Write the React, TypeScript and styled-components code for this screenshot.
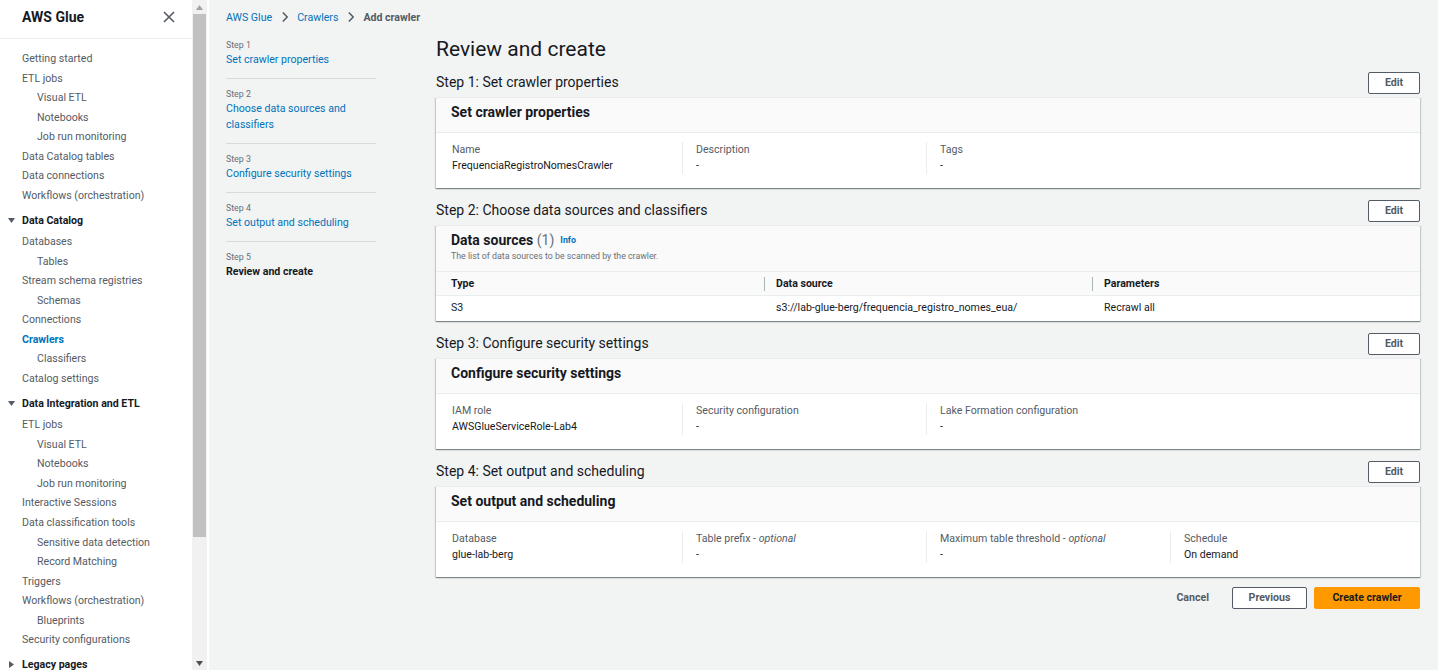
import React from 'react';
import styled, { createGlobalStyle } from 'styled-components';

const GlobalStyle = createGlobalStyle`
  html, body { margin: 0; padding: 0; }
  body {
    font-family: Roboto, 'Liberation Sans', Arial, sans-serif;
    font-size: 10.6px;
    color: #16191f;
    background: #f2f3f3;
    overflow: hidden;
  }
  * { box-sizing: border-box; }
`;

type NavEntry =
  | { kind: 'item'; text: string; level: 1 | 2; active?: boolean }
  | { kind: 'section'; text: string; open: boolean };

const i = (text: string, level: 1 | 2 = 1, active = false): NavEntry => ({ kind: 'item', text, level, active });
const s = (text: string, open = true): NavEntry => ({ kind: 'section', text, open });

const navEntries: NavEntry[] = [
  i('Getting started'),
  i('ETL jobs'),
  i('Visual ETL', 2),
  i('Notebooks', 2),
  i('Job run monitoring', 2),
  i('Data Catalog tables'),
  i('Data connections'),
  i('Workflows (orchestration)'),
  s('Data Catalog'),
  i('Databases'),
  i('Tables', 2),
  i('Stream schema registries'),
  i('Schemas', 2),
  i('Connections'),
  i('Crawlers', 1, true),
  i('Classifiers', 2),
  i('Catalog settings'),
  s('Data Integration and ETL'),
  i('ETL jobs'),
  i('Visual ETL', 2),
  i('Notebooks', 2),
  i('Job run monitoring', 2),
  i('Interactive Sessions'),
  i('Data classification tools'),
  i('Sensitive data detection', 2),
  i('Record Matching', 2),
  i('Triggers'),
  i('Workflows (orchestration)'),
  i('Blueprints', 2),
  i('Security configurations'),
  s('Legacy pages', false),
];

const wizardSteps = [
  { label: 'Step 1', title: 'Set crawler properties' },
  { label: 'Step 2', title: 'Choose data sources and classifiers' },
  { label: 'Step 3', title: 'Configure security settings' },
  { label: 'Step 4', title: 'Set output and scheduling' },
  { label: 'Step 5', title: 'Review and create', current: true },
];

type KV = { label: string; optional?: boolean; value: string };

const Page = styled.div`
  display: flex;
  height: 100vh;
  width: 100%;
`;

const Sidebar = styled.aside`
  display: flex;
  flex-shrink: 0;
  width: 209px;
  height: 100%;
  background: #fff;
  overflow: hidden;
`;

const NavPanel = styled.nav`
  width: 192px;
  flex-shrink: 0;
`;

const NavHeader = styled.div`
  display: flex;
  align-items: center;
  justify-content: space-between;
  height: 39px;
  padding: 0 17px 4px 22px;
  border-bottom: 1px solid #eaeded;
`;

const NavTitle = styled.div`
  font-size: 14px;
  font-weight: 700;
  color: #16191f;
`;

const NavList = styled.div`
  padding-top: 10px;
`;

const NavItem = styled.div<{ $level: number; $active?: boolean }>`
  line-height: 19.57px;
  padding-left: ${(p) => (p.$level === 2 ? 37 : 22)}px;
  white-space: nowrap;
  color: ${(p) => (p.$active ? '#0073bb' : '#545b64')};
  font-weight: ${(p) => (p.$active ? 700 : 400)};
`;

const NavSection = styled.div`
  display: flex;
  align-items: center;
  margin: 5px 0 2px;
  padding-left: 8px;
  line-height: 19.57px;
  font-weight: 700;
  color: #16191f;
  white-space: nowrap;

  svg {
    margin-right: 7px;
  }
`;

const Scrollbar = styled.div`
  display: flex;
  flex-direction: column;
  width: 17px;
  height: 100%;
  background: #f1f1f1;
  border-right: 2px solid #fff;
`;

const ScrollArrow = styled.div`
  display: flex;
  align-items: center;
  justify-content: center;
  height: 14px;
  flex-shrink: 0;
`;

const ScrollThumb = styled.div`
  height: 523px;
  margin: 0 1px;
  background: #c1c1c1;
`;

const ScrollTrack = styled.div`
  flex: 1;
`;

const Main = styled.main`
  flex: 1;
  display: flex;
  flex-direction: column;
  padding: 0 18px 0 17px;
  min-width: 0;
`;

const Breadcrumbs = styled.div`
  display: flex;
  align-items: center;
  height: 34px;
  white-space: nowrap;
`;

const Crumb = styled.span<{ $current?: boolean }>`
  color: ${(p) => (p.$current ? '#545b64' : '#0073bb')};
  font-weight: ${(p) => (p.$current ? 700 : 400)};
`;

const CrumbSep = styled.span`
  display: inline-flex;
  margin: 0 9px 0 10px;
`;

const Body = styled.div`
  display: flex;
  gap: 60px;
`;

const Steps = styled.ol`
  list-style: none;
  margin: 0;
  padding: 2px 0 0;
  width: 150px;
  flex-shrink: 0;
`;

const Step = styled.li`
  padding: 9px 0 10px;
  border-bottom: 1px solid #d5dbdb;

  &:first-child {
    padding-top: 3px;
  }
  &:last-child {
    border-bottom: none;
  }
`;

const StepLabel = styled.div`
  font-size: 8.8px;
  line-height: 13px;
  color: #687078;
`;

const StepTitle = styled.div<{ $current?: boolean }>`
  line-height: 16px;
  color: ${(p) => (p.$current ? '#16191f' : '#0073bb')};
  font-weight: ${(p) => (p.$current ? 700 : 400)};
`;

const Content = styled.div`
  flex: 1;
  min-width: 0;
`;

const PageTitle = styled.h1`
  margin: 2px 0 10px;
  font-size: 21px;
  line-height: 26px;
  font-weight: 400;
  color: #16191f;
`;

const Section = styled.section`
  margin-bottom: 12px;
`;

const SectionHead = styled.div`
  display: flex;
  align-items: center;
  justify-content: space-between;
  height: 22px;
  margin-bottom: 3px;
`;

const SectionTitle = styled.h2`
  margin: 0 0 2px;
  font-size: 14px;
  line-height: 18px;
  font-weight: 400;
  color: #16191f;
`;

const Button = styled.button<{ $variant?: 'normal' | 'primary' | 'link'; $width?: number }>`
  height: 22px;
  width: ${(p) => (p.$width ? `${p.$width}px` : 'auto')};
  padding: 0 14px;
  border-radius: 2px;
  font-family: inherit;
  font-size: 10.6px;
  font-weight: 700;
  line-height: 20px;
  cursor: pointer;
  border: 1px solid
    ${(p) => (p.$variant === 'primary' ? '#ff9900' : p.$variant === 'link' ? 'transparent' : '#545b64')};
  background: ${(p) => (p.$variant === 'primary' ? '#ff9900' : p.$variant === 'link' ? 'transparent' : '#fff')};
  color: ${(p) => (p.$variant === 'primary' ? '#16191f' : '#545b64')};
`;

const Panel = styled.div`
  background: #fff;
  border-top: 1px solid #eaeded;
  box-shadow: 0 1px 1px 0 rgba(0, 28, 36, 0.3), 1px 1px 1px 0 rgba(0, 28, 36, 0.15),
    -1px 1px 1px 0 rgba(0, 28, 36, 0.15);
`;

const PanelHeader = styled.div<{ $compact?: boolean }>`
  padding: 5px 15px ${(p) => (p.$compact ? 8 : 10)}px;
  background: #fafafa;
  border-bottom: 1px solid #eaeded;
`;

const PanelTitle = styled.h3`
  margin: 0;
  font-size: 14px;
  line-height: 19px;
  font-weight: 700;
  color: #16191f;
`;

const Counter = styled.span`
  font-weight: 400;
  color: #687078;
`;

const InfoLink = styled.span`
  margin-left: 6px;
  font-size: 8.8px;
  font-weight: 700;
  color: #0073bb;
  vertical-align: 2px;
`;

const PanelDescription = styled.div`
  font-size: 8.8px;
  line-height: 13px;
  color: #687078;
`;

const ColumnGrid = styled.div`
  display: grid;
  grid-template-columns: repeat(4, 1fr);
  padding: 9px 6px 14px 2px;
`;

const Column = styled.div`
  padding-left: 13px;
  border-left: 1px solid #eaeded;

  &:first-child {
    border-left-color: transparent;
  }
`;

const Label = styled.div`
  line-height: 16px;
  color: #545b64;

  em {
    font-style: italic;
  }
`;

const Value = styled.div`
  line-height: 16px;
  color: #16191f;
`;

const Table = styled.div`
  display: grid;
  grid-template-columns: repeat(3, 1fr);
`;

const HeadCell = styled.div`
  position: relative;
  height: 24px;
  display: flex;
  align-items: center;
  padding-left: 12px;
  background: #fafafa;
  border-bottom: 1px solid #eaeded;
  font-weight: 700;
  color: #16191f;

  &:first-child {
    padding-left: 15px;
  }
  &:not(:first-child)::before {
    content: '';
    position: absolute;
    left: 0;
    top: 5px;
    bottom: 4px;
    width: 1px;
    background: #aab7b8;
  }
`;

const Cell = styled.div`
  height: 25px;
  display: flex;
  align-items: center;
  padding: 0 0 2px 12px;
  color: #16191f;

  &:nth-child(3n + 1) {
    padding-left: 15px;
  }
`;

const Actions = styled.div`
  display: flex;
  justify-content: flex-end;
  align-items: center;
  gap: 7px;
  margin-top: -2px;
`;

const Chevron = () => (
  <svg width="6" height="12" viewBox="0 0 6 12">
    <path d="M0.8 1.5 L5.2 6 L0.8 10.5" fill="none" stroke="#545b64" strokeWidth="1.5" />
  </svg>
);

const Caret = ({ open }: { open: boolean }) =>
  open ? (
    <svg width="7" height="7" viewBox="0 0 7 7">
      <polygon points="0,1 7,1 3.5,6" fill="#545b64" />
    </svg>
  ) : (
    <svg width="7" height="7" viewBox="0 0 7 7">
      <polygon points="1,0 6,3.5 1,7" fill="#545b64" />
    </svg>
  );

const CloseIcon = () => (
  <svg width="12" height="12" viewBox="0 0 12 12">
    <path d="M1 1 L11 11 M11 1 L1 11" stroke="#545b64" strokeWidth="1.6" />
  </svg>
);

const KeyValuePanel = ({ title, items }: { title: string; items: KV[] }) => (
  <Panel>
    <PanelHeader>
      <PanelTitle>{title}</PanelTitle>
    </PanelHeader>
    <ColumnGrid>
      {items.map((it) => (
        <Column key={it.label}>
          <Label>
            {it.label}
            {it.optional && (
              <>
                {' - '}
                <em>optional</em>
              </>
            )}
          </Label>
          <Value>{it.value}</Value>
        </Column>
      ))}
    </ColumnGrid>
  </Panel>
);

const ReviewSection = ({ title, children }: { title: string; children: React.ReactNode }) => (
  <Section>
    <SectionHead>
      <SectionTitle>{title}</SectionTitle>
      <Button $width={52}>Edit</Button>
    </SectionHead>
    {children}
  </Section>
);

export default function App() {
  return (
    <>
      <GlobalStyle />
      <Page>
        <Sidebar>
          <NavPanel>
            <NavHeader>
              <NavTitle>AWS Glue</NavTitle>
              <CloseIcon />
            </NavHeader>
            <NavList>
              {navEntries.map((e, idx) =>
                e.kind === 'section' ? (
                  <NavSection key={idx}>
                    <Caret open={e.open} />
                    {e.text}
                  </NavSection>
                ) : (
                  <NavItem key={idx} $level={e.level} $active={e.active}>
                    {e.text}
                  </NavItem>
                )
              )}
            </NavList>
          </NavPanel>
          <Scrollbar>
            <ScrollArrow>
              <svg width="7" height="5" viewBox="0 0 7 5">
                <polygon points="0,5 7,5 3.5,0" fill="#a3a3a3" />
              </svg>
            </ScrollArrow>
            <ScrollThumb />
            <ScrollTrack />
            <ScrollArrow>
              <svg width="7" height="5" viewBox="0 0 7 5">
                <polygon points="0,0 7,0 3.5,5" fill="#505050" />
              </svg>
            </ScrollArrow>
          </Scrollbar>
        </Sidebar>

        <Main>
          <Breadcrumbs>
            <Crumb>AWS Glue</Crumb>
            <CrumbSep>
              <Chevron />
            </CrumbSep>
            <Crumb>Crawlers</Crumb>
            <CrumbSep>
              <Chevron />
            </CrumbSep>
            <Crumb $current>Add crawler</Crumb>
          </Breadcrumbs>

          <Body>
            <Steps>
              {wizardSteps.map((st) => (
                <Step key={st.label}>
                  <StepLabel>{st.label}</StepLabel>
                  <StepTitle $current={st.current}>{st.title}</StepTitle>
                </Step>
              ))}
            </Steps>

            <Content>
              <PageTitle>Review and create</PageTitle>

              <ReviewSection title="Step 1: Set crawler properties">
                <KeyValuePanel
                  title="Set crawler properties"
                  items={[
                    { label: 'Name', value: 'FrequenciaRegistroNomesCrawler' },
                    { label: 'Description', value: '-' },
                    { label: 'Tags', value: '-' },
                  ]}
                />
              </ReviewSection>

              <ReviewSection title="Step 2: Choose data sources and classifiers">
                <Panel>
                  <PanelHeader $compact>
                    <PanelTitle>
                      Data sources <Counter>(1)</Counter>
                      <InfoLink>Info</InfoLink>
                    </PanelTitle>
                    <PanelDescription>The list of data sources to be scanned by the crawler.</PanelDescription>
                  </PanelHeader>
                  <Table>
                    <HeadCell>Type</HeadCell>
                    <HeadCell>Data source</HeadCell>
                    <HeadCell>Parameters</HeadCell>
                    <Cell>S3</Cell>
                    <Cell>s3://lab-glue-berg/frequencia_registro_nomes_eua/</Cell>
                    <Cell>Recrawl all</Cell>
                  </Table>
                </Panel>
              </ReviewSection>

              <ReviewSection title="Step 3: Configure security settings">
                <KeyValuePanel
                  title="Configure security settings"
                  items={[
                    { label: 'IAM role', value: 'AWSGlueServiceRole-Lab4' },
                    { label: 'Security configuration', value: '-' },
                    { label: 'Lake Formation configuration', value: '-' },
                  ]}
                />
              </ReviewSection>

              <ReviewSection title="Step 4: Set output and scheduling">
                <KeyValuePanel
                  title="Set output and scheduling"
                  items={[
                    { label: 'Database', value: 'glue-lab-berg' },
                    { label: 'Table prefix', optional: true, value: '-' },
                    { label: 'Maximum table threshold', optional: true, value: '-' },
                    { label: 'Schedule', value: 'On demand' },
                  ]}
                />
              </ReviewSection>

              <Actions>
                <Button $variant="link" style={{ marginRight: 1 }}>
                  Cancel
                </Button>
                <Button $width={75}>Previous</Button>
                <Button $variant="primary" $width={106}>
                  Create crawler
                </Button>
              </Actions>
            </Content>
          </Body>
        </Main>
      </Page>
    </>
  );
}
